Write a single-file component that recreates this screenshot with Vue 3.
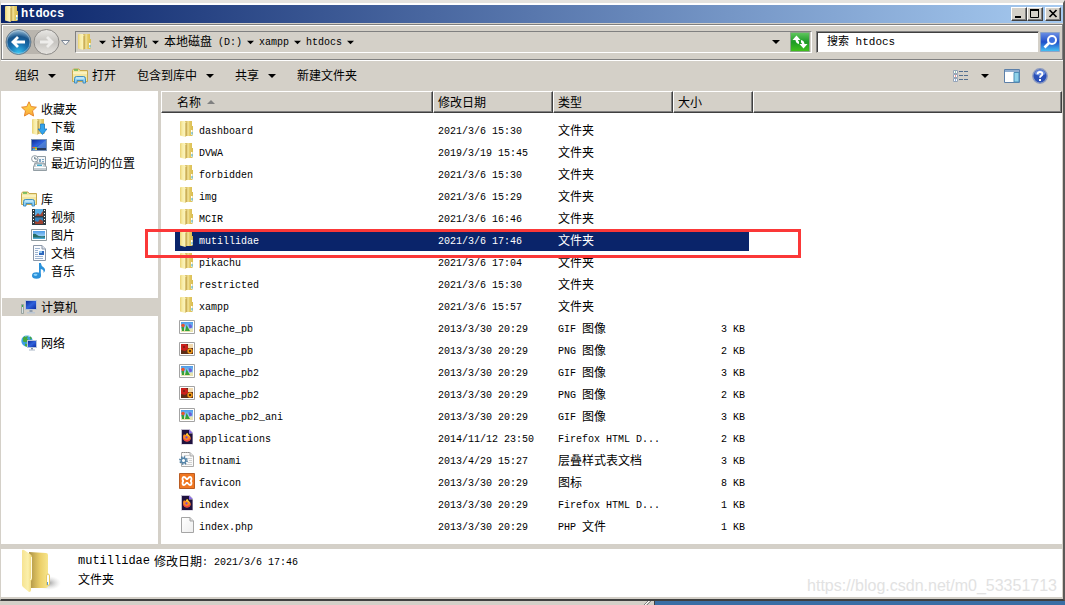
<script setup>
import { h } from 'vue'

// Chinese and Latin runs are set in different sizes, as in a bitmap system font.
const Txt = (props) =>
  h(
    'span',
    { class: 'txt' },
    (props.t.match(/[\u2e80-\u9fff]+|[^\u2e80-\u9fff]+/g) || []).map((run) =>
      h('span', { class: /[\u2e80-\u9fff]/.test(run) ? 'han' : 'lat' }, run)
    )
  )
Txt.props = ['t']

const Ico = (props) =>
  h('svg', { class: 'ico', viewBox: '0 0 16 16', 'aria-hidden': 'true' }, [
    h('use', { href: '#i-' + props.n }),
  ])
Ico.props = ['n']

const crumbs = ['计算机', '本地磁盘 (D:)', 'xampp', 'htdocs']

const groups = [
  {
    icon: 'star',
    label: '收藏夹',
    items: [
      ['download', '下载'],
      ['desktop', '桌面'],
      ['recent', '最近访问的位置'],
    ],
  },
  {
    icon: 'library',
    label: '库',
    items: [
      ['video', '视频'],
      ['picture', '图片'],
      ['document', '文档'],
      ['music', '音乐'],
    ],
  },
  { icon: 'computer', label: '计算机', items: [], current: true },
  { icon: 'network', label: '网络', items: [] },
]

const files = [
  ['folder', 'dashboard', '2021/3/6 15:30', '文件夹', ''],
  ['folder', 'DVWA', '2019/3/19 15:45', '文件夹', ''],
  ['folder', 'forbidden', '2021/3/6 15:30', '文件夹', ''],
  ['folder', 'img', '2021/3/6 15:29', '文件夹', ''],
  ['folder', 'MCIR', '2021/3/6 16:46', '文件夹', ''],
  ['folder', 'mutillidae', '2021/3/6 17:46', '文件夹', ''],
  ['folder', 'pikachu', '2021/3/6 17:04', '文件夹', ''],
  ['folder', 'restricted', '2021/3/6 15:30', '文件夹', ''],
  ['folder', 'xampp', '2021/3/6 15:57', '文件夹', ''],
  ['gif', 'apache_pb', '2013/3/30 20:29', 'GIF 图像', '3 KB'],
  ['png', 'apache_pb', '2013/3/30 20:29', 'PNG 图像', '2 KB'],
  ['gif', 'apache_pb2', '2013/3/30 20:29', 'GIF 图像', '3 KB'],
  ['png', 'apache_pb2', '2013/3/30 20:29', 'PNG 图像', '2 KB'],
  ['gif', 'apache_pb2_ani', '2013/3/30 20:29', 'GIF 图像', '3 KB'],
  ['firefox', 'applications', '2014/11/12 23:50', 'Firefox HTML D...', '2 KB'],
  ['css', 'bitnami', '2013/4/29 15:27', '层叠样式表文档', '3 KB'],
  ['xampp', 'favicon', '2013/3/30 20:29', '图标', '8 KB'],
  ['firefox', 'index', '2013/3/30 20:29', 'Firefox HTML D...', '1 KB'],
  ['page', 'index.php', '2013/3/30 20:29', 'PHP 文件', '1 KB'],
]
const selected = 'mutillidae'
</script>

<template>
  <svg class="defs" width="0" height="0" aria-hidden="true">
    <defs>
      <linearGradient id="g-fl" x1="0" x2="1"><stop offset="0" stop-color="#e9d171" /><stop offset=".35" stop-color="#f7eba4" /><stop offset=".8" stop-color="#fbf3bb" /><stop offset="1" stop-color="#e6d27c" /></linearGradient>
      <linearGradient id="g-fr" x1="0" x2="1"><stop offset="0" stop-color="#c4a244" /><stop offset=".4" stop-color="#f1e195" /><stop offset=".6" stop-color="#e3c963" /><stop offset="1" stop-color="#d8bb50" /></linearGradient>
      <linearGradient id="g-sky" x2="0" y2="1"><stop offset="0" stop-color="#4c9be8" /><stop offset="1" stop-color="#c5ebff" /></linearGradient>
      <linearGradient id="g-screen" x2="1" y2="1"><stop offset="0" stop-color="#0b2c9a" /><stop offset=".5" stop-color="#2f62dc" /><stop offset="1" stop-color="#0d2ea4" /></linearGradient>
      <linearGradient id="g-star" x2="0" y2="1"><stop offset="0" stop-color="#ffe04d" /><stop offset="1" stop-color="#f9a83a" /></linearGradient>
      <linearGradient id="g-green" x2="0" y2="1"><stop offset="0" stop-color="#62c860" /><stop offset=".5" stop-color="#1d9a26" /><stop offset="1" stop-color="#42c31b" /></linearGradient>
      <linearGradient id="g-find" x2="0" y2="1"><stop offset="0" stop-color="#6d90e4" /><stop offset=".5" stop-color="#1f4fca" /><stop offset="1" stop-color="#48c5f4" /></linearGradient>
      <radialGradient id="g-back" cx=".5" cy=".95" r=".9"><stop offset="0" stop-color="#35c4f2" /><stop offset=".45" stop-color="#176fae" /><stop offset=".75" stop-color="#17558c" /><stop offset="1" stop-color="#8fb6d2" /></radialGradient>
      <linearGradient id="g-fwd" x2="0" y2="1"><stop offset="0" stop-color="#e9e8e5" /><stop offset=".5" stop-color="#c6c4c0" /><stop offset="1" stop-color="#e7e5e1" /></linearGradient>
      <linearGradient id="g-big" x1="0" x2="1"><stop offset="0" stop-color="#f6e391" /><stop offset=".6" stop-color="#fbf0ac" /><stop offset="1" stop-color="#efd572" /></linearGradient>
      <linearGradient id="g-big2" x1="0" x2="1"><stop offset="0" stop-color="#a98f45" /><stop offset=".3" stop-color="#cdb257" /><stop offset=".6" stop-color="#ecd06a" /><stop offset="1" stop-color="#f7e58c" /></linearGradient>
      <radialGradient id="g-shade"><stop offset="0" stop-color="#8c8c8c" stop-opacity=".8" /><stop offset="1" stop-color="#ccc" stop-opacity="0" /></radialGradient>
      <linearGradient id="g-page" x2="1" y2="1"><stop offset="0" stop-color="#fff" /><stop offset="1" stop-color="#eee" /></linearGradient>
    </defs>
    <symbol id="i-folder" viewBox="0 0 16 16">
      <path d="M6 0h7v5h1v9l-1 1H6z" fill="url(#g-fr)" />
      <path d="M1 .5 2 0h4l1 1v14l-.5 1L1 14.500z" fill="url(#g-fl)" />
      <path d="M6.500 2h1v13l-1 .5z" fill="#b89a42" opacity=".8" />
      <path d="M12 9h1.500v5H12z" fill="#fff" /><path d="M12.500 11h1v2.500h-1z" fill="#38a6c9" />
    </symbol>
    <symbol id="i-star" viewBox="0 0 16 16">
      <path d="m8 .8 2.200 4.800 5.200.6-3.900 3.600 1.100 5.200L8 12.400 3.400 15l1.100-5.200L.6 6.200l5.200-.6z" fill="url(#g-star)" stroke="#e8872c" />
    </symbol>
    <symbol id="i-download" viewBox="0 0 16 16">
      <use href="#i-folder" />
      <path d="M9.500 5h4v5H16l-4.500 5.500L7 10h2.500z" fill="#33a4ed" stroke="#1574c2" stroke-width=".7" />
    </symbol>
    <symbol id="i-desktop" viewBox="0 0 16 16">
      <path d="M0 2h16v12H0z" fill="#7b94b5" /><path d="M1 3h14v8H1z" fill="url(#g-screen)" /><path d="M15 3v8H5z" fill="#5d91dc" opacity=".7" />
      <path d="M1 11h14v2H1z" fill="#273b5d" /><path d="M1.500 10H4v1.500H1.500z" fill="#ed6a34" /><path d="M4 10h2v1.500H4z" fill="#7ecb45" /><path d="M1.500 11.500H4V13H1.500z" fill="#45b9f2" /><path d="M4 11.500h2V13H4z" fill="#f6cf3b" />
    </symbol>
    <symbol id="i-recent" viewBox="0 0 16 16">
      <path d="M6 1.500h8.500V10H6z" fill="#f3f6f8" stroke="#8d9aa3" /><path d="M8 4h2v3H8zM11 4h2v1h-2zM11 6h2v1h-2z" fill="#7ba5c4" />
      <path d="m4 8h9l2.500 4v3.500H2.500V12z" fill="#c4ccd1" stroke="#7f8b92" stroke-width=".8" /><path d="M5.500 9.500h6l1 2h-8z" fill="#fff" /><path d="M6 9.500h5v1.500H6z" fill="#41a7c9" /><path d="M3 12.500h12" stroke="#fff" />
      <circle cx="3.800" cy="3.800" r="3.200" fill="#fff" stroke="#929da4" /><path d="M3.800 1.800v2.200h2" fill="none" stroke="#526b7a" />
    </symbol>
    <symbol id="i-library" viewBox="0 0 16 16">
      <path d="M.5 2.500 1.500 1H7l1 1.500h7.500v11H.5z" fill="#f4e7a0" stroke="#c7a94f" /><path d="M2 2h4" stroke="#5fb454" stroke-width="1.500" /><path d="M1 5h14" stroke="#fffbe0" />
      <path d="M2.500 15V10.500q0-2 2-2h7q2 0 2 2V15H11v-2.500H5V15z" fill="#91d1f3" stroke="#3586bd" stroke-width=".9" /><path d="M4 10h8" stroke="#e5f7ff" />
    </symbol>
    <symbol id="i-video" viewBox="0 0 16 16">
      <path d="M1 0h14v16H1z" fill="#303d43" /><path d="M4 0h8v7H4z" fill="#58aee5" /><path d="M4 8.500h8V15H4z" fill="#3283bf" /><path d="m4 7 3-3 2 2 3-4v5zM4 15v-3l3 1 2-3 3 2v3z" fill="#9e4332" />
      <path d="M2 1.500h1M2 4.500h1M2 7.500h1M2 10.500h1M2 13.500h1M13 1.500h1M13 4.500h1M13 7.500h1M13 10.500h1M13 13.500h1" stroke="#fff" />
    </symbol>
    <symbol id="i-picture" viewBox="0 0 16 16">
      <path d="M.5 2.500h15v11H.5z" fill="#fff" stroke="#8d999f" /><path d="M2 4h12v8H2z" fill="url(#g-sky)" /><path d="M2 7q2-1 4 1t8 1v3H2z" fill="#246c66" /><path d="M2 10.500h12V12H2z" fill="#4ca8d1" />
    </symbol>
    <symbol id="i-document" viewBox="0 0 16 16">
      <path d="M2.500.5H11L14.500 4v11.500h-12z" fill="#fafcff" stroke="#8b97a7" /><path d="M11 .5V4h3.500" fill="#dde4ef" stroke="#8b97a7" /><path d="M4 3.500h5M4 5.500h3M4 7.500h3M4 9.500h3M4 11.500h8M4 13.500h8" stroke="#9bb2cf" /><path d="M8 6h5v4H8z" fill="#2d67bc" /><path d="M8 6h3v2H8z" fill="#8bc3ed" />
    </symbol>
    <symbol id="i-music" viewBox="0 0 16 16">
      <ellipse cx="5.500" cy="12.500" rx="4.500" ry="3.200" fill="#2b91da" /><path d="M8 0h1.800q.4 3 3 4.500Q15.500 7 12.500 10q.8-3.500-2.700-4v7H8z" fill="#2b91da" /><ellipse cx="4.500" cy="11.800" rx="2" ry="1.100" fill="#8ad2fa" />
    </symbol>
    <symbol id="i-computer" viewBox="0 0 16 16">
      <path d="M.5 5.500h2v9h-2z" fill="#d8e2e2" stroke="#8a9794" stroke-width=".8" /><path d="M1 6h1v2H1z" fill="#38b14a" />
      <path d="M4 1h12v10H4z" fill="#b6c3d5" /><path d="M5 2h10v8H5z" fill="url(#g-screen)" /><path d="M8.500 11h3v2h-3z" fill="#8f9cac" /><path d="M6 13h8v1.500H6z" fill="#bcc7d3" />
    </symbol>
    <symbol id="i-network" viewBox="0 0 16 16">
      <circle cx="6" cy="6" r="5.700" fill="#3c9fe4" /><path d="M2 2.500q3-2.500 5-1l-1 2 1.500 1.500L5 7.500 2 6.500zM4 8.500l3 1-1 2.200-2-.7zM8.500 1l2.500 2-1.500 2z" fill="#45a83e" /><path d="M4 1q3-1 5 .5" fill="none" stroke="#bfe7fa" />
      <path d="M6 5h10v8H6z" fill="#b7c5da" /><path d="M7 6h8v6H7z" fill="url(#g-screen)" /><path d="M10 13h2v1.500h-2z" fill="#8391a4" /><path d="M8 14.500h6v1H8z" fill="#aab6c6" />
    </symbol>
    <symbol id="i-gif" viewBox="0 0 16 16">
      <path d="M.5 1.500h15v13H.5z" fill="#fff" stroke="#a3a3a3" /><path d="M2 3h12v10H2z" fill="url(#g-sky)" /><path d="M2 9.500h12V13H2z" fill="#e8e3b0" /><path d="M2.500 8h2.500v4H3zM7.500 6l3.500 6H6z" fill="#34a13a" /><circle cx="4" cy="6.500" r="1.800" fill="#e8542c" /><path d="M9.500 5.500q3.500-1 3.500 3l-2.500 1z" fill="#6a5fd7" />
    </symbol>
    <symbol id="i-png" viewBox="0 0 16 16">
      <path d="M.5 1.500h15v13H.5z" fill="#fff" stroke="#a3a3a3" /><path d="M2 3h12v10H2z" fill="#5c2d18" /><path d="M9 3h5v4H9z" fill="#f0d9b0" /><path d="M2 3h5l2 2v3l-3 2-4-1z" fill="#c9201c" /><circle cx="5" cy="6" r="1" fill="#702014" /><circle cx="11" cy="10" r="2.700" fill="#f09a18" /><circle cx="11" cy="10" r="1.100" fill="#2f1b12" />
    </symbol>
    <symbol id="i-firefox" viewBox="0 0 16 16">
      <path d="M2 0h8.500L14 3.500V15.500H2z" fill="#c4bfd0" /><path d="M3 1h7v3.500h3.500v10.500H3z" fill="#20123f" /><path d="M10 .5 13.500 4H10z" fill="#8767e8" />
      <path d="M4 8q0-2 1.200-3 .3 1 1.200 1Q7 4.500 8.500 4q0 1.500 1.500 2.300 2 1.200 1.700 3.200-.5 3-3.700 3Q4 12.300 4 8z" fill="#ff8a1e" /><path d="M4 8q1 3 4 3 2.500-.2 3.500-2.500 0 4-3.600 4Q4 12 4 8z" fill="#ee3f4a" /><circle cx="7.500" cy="8.400" r="1.100" fill="#7248d8" /><path d="M8.500 4q0 1.500 1.500 2.300l.8 2Q9 6 7 6q.3-1.500 1.500-2z" fill="#ffda3a" />
    </symbol>
    <symbol id="i-css" viewBox="0 0 16 16">
      <path d="M2.500 1.500H11L14.500 5v10.500h-12z" fill="#fafafa" stroke="#ababab" /><path d="M3 1.500h8" stroke="#8c8c8c" stroke-dasharray="1 1" /><path d="M11 1.500V5h3.500" fill="#e1e1e1" stroke="#aaa" /><path d="M5 4.500h5M9 7.500h4M10 9.500h3M9 11.500h4M6 13.500h7" stroke="#d0d0d0" />
      <circle cx="4.500" cy="9.500" r="3.500" fill="none" stroke="#4f7c9f" stroke-width="1.800" stroke-dasharray="1.370 1.370" /><circle cx="4.500" cy="9.500" r="2.300" fill="#fff" stroke="#5485aa" stroke-width="1.500" />
    </symbol>
    <symbol id="i-xampp" viewBox="0 0 16 16">
      <path d="M.5.5h15v15H.5z" fill="#f07722" stroke="#ba5d24" />
      <path d="M5 4q-1.500 0-1.500 2T5 8q-1.500 0-1.500 2T5 12q1 0 2.500-2h1q1.500 2 2.500 2 1.500 0 1.500-2T11 8q1.500 0 1.500-2T11 4Q10 4 8.500 6h-1Q6 4 5 4z" fill="none" stroke="#fff" stroke-width="1.800" />
    </symbol>
    <symbol id="i-page" viewBox="0 0 16 16">
      <path d="M2.500.5H11L14.500 4v11.500h-12z" fill="url(#g-page)" stroke="#a5a5a5" /><path d="M11 .5V4h3.500" fill="#ddd" stroke="#a5a5a5" />
    </symbol>
    <symbol id="i-views" viewBox="0 0 16 16">
      <path d="M.5 2.500h4v3h-4zM.5 6.500h4v3h-4zM.5 10.500h4v3h-4z" fill="#fff" stroke="#97a5b7" /><path d="M2 3.500h1v1H2z" fill="#2c9160" /><path d="M2 7.500h1v1H2z" fill="#e02c22" /><path d="M2 11.500h1v1H2z" fill="#2066c7" />
      <path d="M6 3.500h4M11 3.500h4M6 7.500h4M11 7.500h4M6 11.500h4M11 11.500h4" stroke="#55708f" />
    </symbol>
    <symbol id="i-pane" viewBox="0 0 16 16">
      <path d="M.5 1.500h15v13H.5z" fill="#fff" stroke="#5c7fa8" /><path d="M1 2h14v2H1z" fill="#90aed0" /><path d="M10 4.500h5v9.500h-5z" fill="#8fd2ea" stroke="#4d8eb6" />
    </symbol>
    <symbol id="i-help" viewBox="0 0 16 16">
      <circle cx="8" cy="8" r="7.200" fill="#2a50b8" stroke="#8d9bc0" stroke-width="1.400" /><path d="M2.500 6q1-4 5.500-4t5.500 4q-5 3-11 0z" fill="#6d8fe0" />
      <path d="M5.600 6.200q0-2.200 2.400-2.200t2.400 2q0 1.200-1.300 1.900Q8 8.500 8 9.800" fill="none" stroke="#fff" stroke-width="1.800" /><path d="M7 11h2v2H7z" fill="#fff" />
    </symbol>
    <symbol id="i-down" viewBox="0 0 16 16"><path d="M0 4h16L8 12z" /></symbol>
  </svg>

  <div class="screen">
    <main class="window">
      <header class="title">
        <Ico n="folder" />
        <h1>htdocs</h1>
        <div class="controls">
          <button aria-label="最小化"><svg viewBox="0 0 14 12"><path d="M3 8h6v2H3z" /></svg></button>
          <button aria-label="最大化"><svg viewBox="0 0 14 12"><path d="M2.500 1.500h8v8h-8z" fill="none" stroke="#000" /><path d="M2 1h9v2H2z" /></svg></button>
          <button class="close" aria-label="关闭"><svg viewBox="0 0 14 12"><path d="m3.500 2 7 7M10.500 2l-7 7" stroke="#000" stroke-width="1.700" /></svg></button>
        </div>
      </header>

      <div class="address-row">
        <div class="travel">
          <svg class="travel-bg" viewBox="0 0 66 28" aria-hidden="true">
            <path d="M14 2h30v24H14z" fill="#b9b5ae" />
            <circle cx="13.500" cy="14" r="12.500" fill="url(#g-back)" stroke="#6c7e8c" />
            <circle cx="13.500" cy="14" r="11.500" fill="none" stroke="#c5d7e4" stroke-opacity=".5" />
            <path d="M20 14H8.500M13 9l-5 5 5 5" fill="none" stroke="#fff" stroke-width="2.800" />
            <circle cx="41.500" cy="14" r="12.500" fill="url(#g-fwd)" stroke="#8c8a87" />
            <path d="M35 14h11.500M42 9l5 5-5 5" fill="none" stroke="#eeedeb" stroke-width="2.800" />
            <path d="M56.500 12.500h8L60.500 17z" fill="#f6f6f6" stroke="#7c8796" />
          </svg>
          <button class="hit" aria-label="后退"></button>
          <button class="hit" aria-label="前进"></button>
        </div>
        <nav class="address" aria-label="地址">
          <Ico n="folder" />
          <Ico class="tri" n="down" />
          <template v-for="c in crumbs" :key="c">
            <a href="#"><Txt :t="c" /></a>
            <Ico class="tri" n="down" />
          </template>
          <button class="drop" aria-label="以前的位置"><Ico class="tri wide" n="down" /></button>
          <button class="refresh" aria-label="刷新">
            <svg viewBox="0 0 20 20"><path d="M.5.5h19v19H.5z" fill="url(#g-green)" stroke="#8da58a" /><path d="M6.500 3.500 2.500 8h3q.3 3.500 3.500 4V9.500Q8 9 8 8h2.500zM13.500 16.500l4-4.500h-3q-.3-3.500-3.500-4v2.500q1 .5 1 1.500H9.500z" fill="#fff" /></svg>
          </button>
        </nav>
        <form class="search" @submit.prevent>
          <input type="search" aria-label="搜索 htdocs" placeholder="搜索 htdocs" />
          <button aria-label="搜索">
            <svg viewBox="0 0 20 20"><path d="M.5.5h19v19H.5z" fill="url(#g-find)" stroke="#8ea4c6" /><circle cx="12" cy="8" r="4" fill="#3d70df" stroke="#fff" stroke-width="2" /><path d="m9 11-4.500 4.500" stroke="#fff" stroke-width="2.600" /></svg>
          </button>
        </form>
      </div>

      <div class="toolbar">
        <button><Txt t="组织" /><Ico class="tri wide" n="down" /></button>
        <button class="open"><Ico n="library" /><Txt t="打开" /></button>
        <button><Txt t="包含到库中" /><Ico class="tri wide" n="down" /></button>
        <button><Txt t="共享" /><Ico class="tri wide" n="down" /></button>
        <button><Txt t="新建文件夹" /></button>
        <div class="tools">
          <button aria-label="更改视图"><Ico n="views" /><Ico class="tri wide" n="down" /></button>
          <button aria-label="预览窗格"><Ico n="pane" /></button>
          <button aria-label="帮助"><Ico n="help" /></button>
        </div>
      </div>

      <div class="body">
        <nav class="tree" aria-label="导航">
          <ul v-for="g in groups" :key="g.label">
            <li :class="{ current: g.current }">
              <a href="#"><Ico :n="g.icon" /><Txt :t="g.label" /></a>
            </li>
            <li v-for="[icon, label] in g.items" :key="label" class="child">
              <a href="#"><Ico :n="icon" /><Txt :t="label" /></a>
            </li>
          </ul>
        </nav>
        <section class="list">
          <table>
            <colgroup>
              <col class="c-name" /><col class="c-mid" /><col class="c-mid" /><col class="c-size" /><col />
            </colgroup>
            <thead>
              <tr>
                <th><div class="first"><Txt t="名称" /><svg class="sort" viewBox="0 0 8 4" aria-hidden="true"><path d="M0 4h8L4 0z" /></svg></div></th>
                <th><div><Txt t="修改日期" /></div></th>
                <th><div><Txt t="类型" /></div></th>
                <th><div><Txt t="大小" /></div></th>
                <th><div></div></th>
              </tr>
            </thead>
            <tbody>
              <tr v-for="([icon, name, date, type, size], i) in files" :key="i" :class="{ selected: name === selected }">
                <td><div class="name"><Ico :n="icon" /><Txt :t="name" /></div></td>
                <td><div><Txt :t="date" /></div></td>
                <td><div><Txt :t="type" /></div></td>
                <td><div class="size"><Txt :t="size" /></div></td>
                <td></td>
              </tr>
            </tbody>
          </table>
          <div class="marker"></div>
        </section>
      </div>

      <footer class="details">
        <svg class="big" viewBox="0 0 40 44" aria-hidden="true">
          <ellipse cx="28" cy="34" rx="12" ry="7" fill="url(#g-shade)" />
          <path d="M8 3l17 1q2 0 2 2v31q0 2-2 2H10z" fill="url(#g-big2)" />
          <path d="M1 2q0-2 2-1l6 4q2 1 2 3v22l-1 2v9q0 2-2 2l-6-5q-1-1-1-2z" fill="url(#g-big)" />
          <path d="M10.500 8v21l-1 2" fill="none" stroke="#fffbe0" />
          <path d="M25.500 27q0-2 1.500-2t1.500 2v9h-3z" fill="#fff" stroke="#e8cc65" /><path d="M26 33h1v3h-1z" fill="#5c9ed0" />
        </svg>
        <div class="facts">
          <p><span class="lead">mutillidae</span><Txt t="修改日期: 2021/3/6 17:46" /></p>
          <p><Txt t="文件夹" /></p>
        </div>
        <span class="credit">https://blog.csdn.net/m0_53351713</span>
      </footer>
    </main>
    <div class="behind">
      <div class="other"><svg viewBox="0 0 8 4" aria-hidden="true"><path d="m1 4 4-4M4 4l4-4" stroke="#808080" /><path d="m2 4 4-4" stroke="#fff" /></svg></div>
    </div>
  </div>
</template>

<style>
body {
  margin: 0;
  background: #3a6ea5;
}
.txt {
  white-space: pre;
}
.han {
  vertical-align: -1px;
}
.lat {
  font-family: "Liberation Mono", monospace;
  font-size: 10px;
}
.ico {
  width: 16px;
  height: 16px;
  flex: none;
  display: block;
}
</style>

<style scoped>
* {
  box-sizing: border-box;
}
.defs {
  position: absolute;
}
.screen {
  min-height: 100vh;
  display: flex;
  flex-direction: column;
  font: 12px/18px "Liberation Sans", "Noto Sans CJK SC", sans-serif;
  color: #000;
}
button {
  font: inherit;
  color: inherit;
  padding: 0;
  border: 0;
  background: none;
  display: flex;
  align-items: center;
}
a {
  color: inherit;
  text-decoration: none;
}
.window {
  flex: 1;
  display: flex;
  flex-direction: column;
  background: #d4d0c8;
  border-style: solid;
  border-width: 3px 2px 2px 1px;
  border-color: #e4e2de #5c5a58 #404040 #d4d0c8;
}
.title {
  display: flex;
  align-items: center;
  gap: 1px;
  height: 20px;
  border-top: 2px solid #fff;
  padding: 0 2px 0 3px;
  background: linear-gradient(90deg, #0a246a, #a6caf0);
  color: #fff;
}
.title h1 {
  margin: 0;
  font: bold 12px/18px "Liberation Mono", monospace;
}
.controls {
  margin-left: auto;
  display: flex;
}
.controls button {
  width: 16px;
  height: 14px;
  background: #d4d0c8;
  border: 1px solid;
  border-color: #fff #404040 #404040 #fff;
  box-shadow: inset -1px -1px #808080;
}
.controls svg {
  width: 14px;
  height: 12px;
}
.controls .close {
  margin-left: 2px;
}
.address-row {
  display: flex;
  align-items: center;
  height: 36px;
  margin-top: 1px;
  padding: 0 2px 0 3px;
  border: 1px solid #808080;
  box-shadow: inset 1px 1px #fff, 0 1px #fff;
}
.travel {
  position: relative;
  display: flex;
  width: 70px;
}
.travel-bg {
  position: absolute;
  left: 0;
  top: 0;
  width: 66px;
  height: 28px;
}
.hit {
  width: 28px;
  height: 28px;
  z-index: 1;
}
.address {
  flex: 1;
  display: flex;
  align-items: center;
  height: 22px;
  padding: 0 1px;
  border: 1px solid;
  border-color: #808080 #fff #fff #808080;
}
.address > .ico:first-child {
  margin-right: 6px;
}
.address a {
  margin: 0 5px;
}
.tri {
  width: 7px;
  height: 7px;
}
.tri.wide {
  width: 8px;
  height: 8px;
}
.drop {
  margin-left: auto;
  height: 20px;
  padding: 0 10px;
}
.refresh svg,
.search svg {
  display: block;
  width: 20px;
  height: 20px;
}
.search {
  display: flex;
  align-items: center;
  gap: 1px;
  width: 244px;
  margin-left: 4px;
}
.search input {
  flex: 1;
  min-width: 0;
  height: 22px;
  padding: 0 0 0 10px;
  background: #fff;
  border: 1px solid;
  border-color: #808080 #d4d0c8 #d4d0c8 #808080;
  box-shadow: inset 1px 1px #404040;
  border-radius: 0;
  font: 11px/18px "Liberation Mono", "Noto Sans CJK SC", monospace;
}
.search input::placeholder {
  color: #000;
  opacity: 1;
}
.toolbar {
  display: flex;
  align-items: center;
  gap: 21px;
  height: 31px;
  padding: 0 15px 0 14px;
}
.toolbar button {
  gap: 9px;
}
.toolbar .open {
  gap: 4px;
  margin-left: -5px;
}
.tools {
  margin-left: auto;
  display: flex;
  gap: 12px;
}
.toolbar .tools button:first-child {
  gap: 12px;
  margin-right: 3px;
}
.body {
  flex: 1;
  display: flex;
  gap: 3px;
  padding-right: 1px;
}
.tree {
  width: 157px;
  padding: 9px 0 0 1px;
  background: #fff;
}
.tree ul {
  list-style: none;
  margin: 0 0 18px;
  padding: 0;
}
.tree a {
  display: flex;
  align-items: center;
  gap: 4px;
  height: 18px;
  padding-left: 19px;
}
.tree .child a {
  padding-left: 29px;
}
.tree .current {
  background: #d4d0c8;
}
.list {
  position: relative;
  flex: 1;
  background: #fff;
  padding-bottom: 7px;
}
table {
  width: 100%;
  table-layout: fixed;
  border-collapse: separate;
  border-spacing: 0;
}
.c-name {
  width: 272px;
}
.c-mid {
  width: 120px;
}
.c-size {
  width: 80px;
}
th,
td {
  padding: 0;
  font-weight: normal;
  text-align: left;
}
th div {
  display: flex;
  align-items: center;
  gap: 6px;
  height: 22px;
  padding-left: 4px;
  background: #d4d0c8;
  border: 1px solid;
  border-color: #fff #404040 #404040 #fff;
  box-shadow: inset -1px -1px #808080;
}
th .first {
  padding-left: 15px;
}
.sort {
  width: 8px;
  height: 4px;
  fill: #808080;
}
tbody::before {
  content: "";
  display: block;
  height: 6px;
}
td div {
  height: 22px;
  line-height: 22px;
  padding-left: 5px;
}
td .name {
  display: flex;
  gap: 4px;
  margin-left: 14px;
  padding-left: 4px;
}
.name .ico {
  margin-top: 2px;
}
td .size {
  margin-right: 4px;
  padding-right: 4px;
  text-align: right;
}
.selected div {
  background: #0a246a;
  color: #fff;
}
.marker {
  position: absolute;
  left: -16px;
  top: 138px;
  width: 656px;
  height: 29px;
  border: 3px solid #fb3838;
}
.details {
  display: flex;
  align-items: flex-start;
  min-height: 48px;
  margin: 5px 1px 2px 0;
  padding-left: 20px;
  background: #fff;
}
.big {
  width: 40px;
  height: 44px;
}
.facts {
  padding: 3px 0 0 17px;
}
.facts p {
  display: flex;
  height: 18px;
  margin: 0;
}
.lead {
  margin-right: 4px;
  font-family: "Liberation Mono", monospace;
}
.credit {
  margin: 0 5px 2px auto;
  align-self: flex-end;
  font-size: 16px;
  color: #e2e2e2;
}
.behind {
  display: flex;
  height: 4px;
  background: #3a6ea5;
}
.other {
  width: 655px;
  display: flex;
  justify-content: flex-end;
  padding-right: 3px;
  background: #d4d0c8;
  border-right: 1px solid #404040;
}
.other svg {
  width: 8px;
  height: 4px;
}
</style>
